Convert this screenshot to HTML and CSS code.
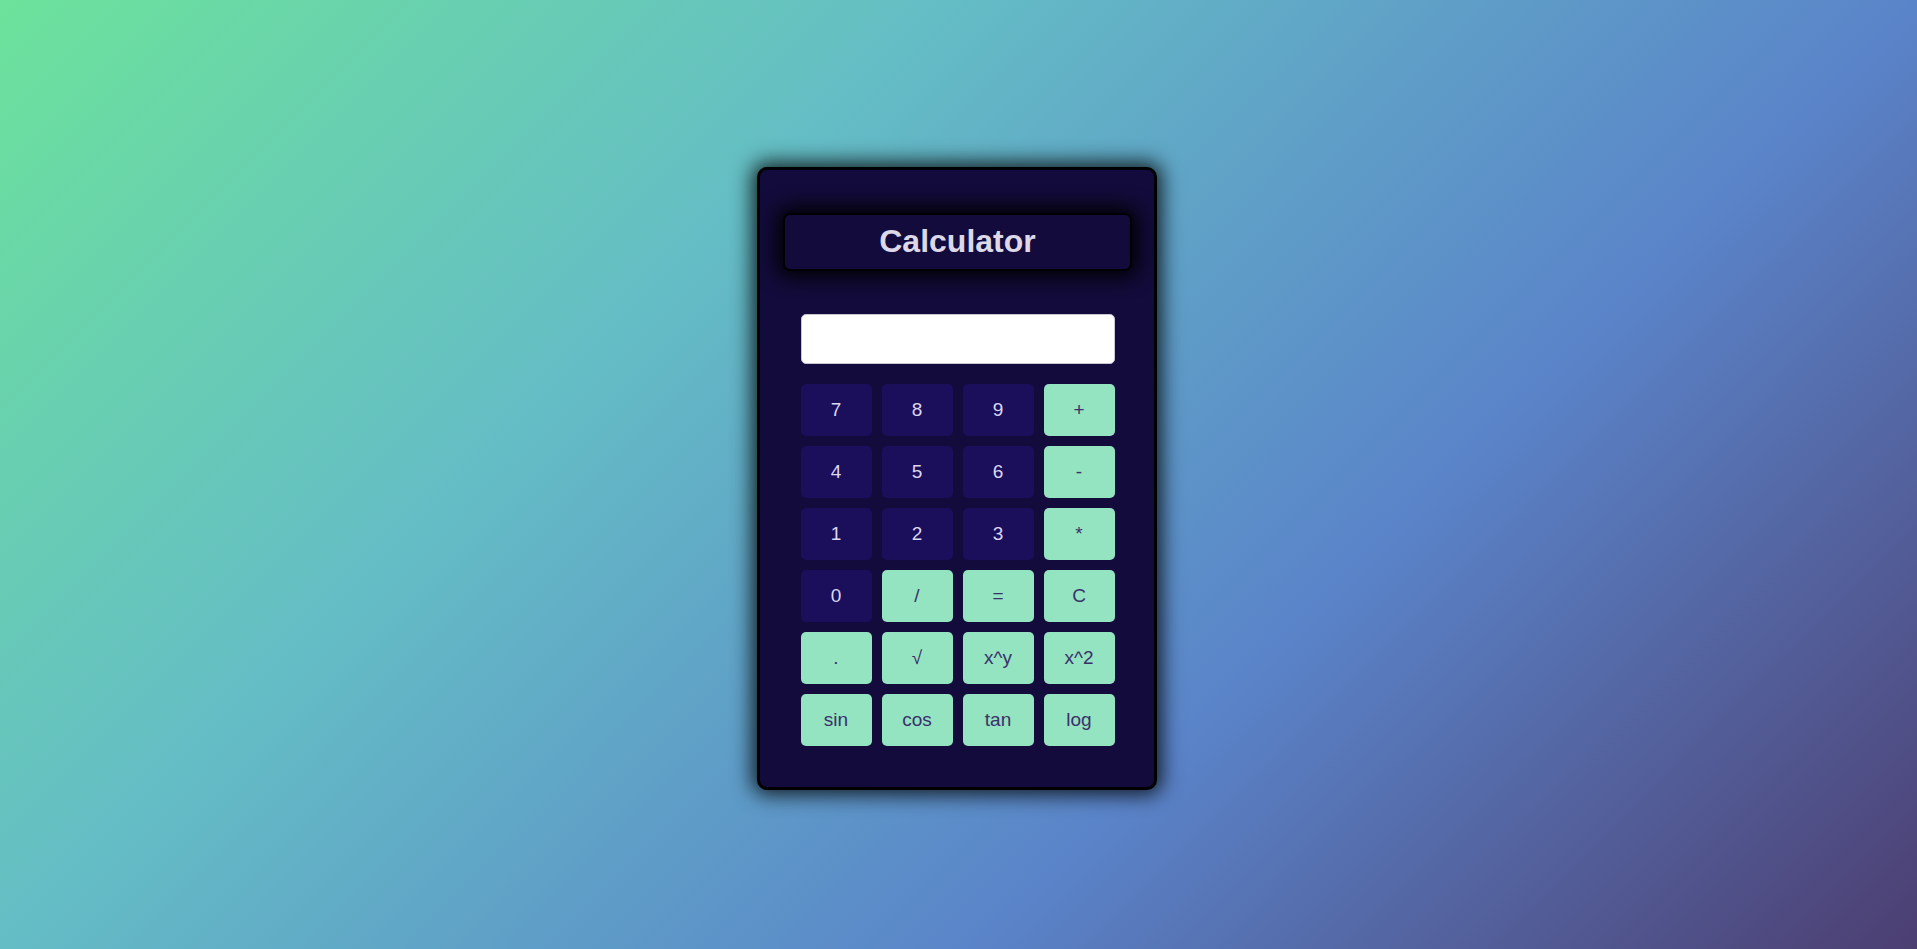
FILE: index.html
```html
<!DOCTYPE html>
<html lang="en">
<head>
<meta charset="utf-8">
<title>Calculator</title>
<link rel="stylesheet" href="styles.css">
</head>
<body>
<main class="page">
  <div class="calculator">
    <h1 class="title">Calculator</h1>
    <input class="display" type="text" readonly>
    <div class="keys">
      <button class="key num">7</button>
      <button class="key num">8</button>
      <button class="key num">9</button>
      <button class="key op">+</button>
      <button class="key num">4</button>
      <button class="key num">5</button>
      <button class="key num">6</button>
      <button class="key op">-</button>
      <button class="key num">1</button>
      <button class="key num">2</button>
      <button class="key num">3</button>
      <button class="key op">*</button>
      <button class="key num">0</button>
      <button class="key op">/</button>
      <button class="key op">=</button>
      <button class="key op">C</button>
      <button class="key op">.</button>
      <button class="key op">√</button>
      <button class="key op">x^y</button>
      <button class="key op">x^2</button>
      <button class="key op">sin</button>
      <button class="key op">cos</button>
      <button class="key op">tan</button>
      <button class="key op">log</button>
    </div>
  </div>
</main>
</body>
</html>
```

FILE: styles.css
```css
* { box-sizing: border-box; }

html, body {
  margin: 0;
  padding: 0;
  height: 100%;
}

body {
  font-family: "Liberation Sans", Arial, sans-serif;
  background: linear-gradient(135deg, #6ce29b 0%, #64bdc5 33%, #5a84c9 67%, #4c3e71 100%);
  background-attachment: fixed;
}

.page {
  min-height: 100vh;
  display: flex;
  align-items: center;
  justify-content: center;
  padding: 7px 3px 0 0;
}

.calculator {
  width: 400px;
  background: #130b3b;
  border: 3px solid #000;
  border-radius: 10px;
  box-shadow: 0 0 20px 5px rgba(0, 0, 0, 0.8);
  padding: 43px 22px 41px 23px;
  display: flex;
  flex-direction: column;
  align-items: center;
}

.title {
  margin: 0;
  width: 349px;
  height: 58px;
  display: flex;
  align-items: center;
  justify-content: center;
  background: #130b3b;
  border: 2px solid #000;
  border-radius: 7px;
  box-shadow: 0 0 20px 6px #000;
  color: #dcd8e8;
  font-size: 32px;
  font-weight: bold;
}

.display {
  margin-top: 43px;
  width: 314px;
  height: 50px;
  background: #fff;
  border: 1px solid #c9c6d2;
  border-radius: 5px;
  outline: none;
  font-family: inherit;
  font-size: 20px;
}

.keys {
  margin-top: 20px;
  display: grid;
  grid-template-columns: repeat(4, 71px);
  grid-auto-rows: 52px;
  gap: 10px;
}

.key {
  border: none;
  border-radius: 5px;
  font-family: "Liberation Sans", Arial, sans-serif;
  font-size: 19px;
  padding: 0;
  cursor: pointer;
}

.num {
  background: #1b0e5b;
  color: #dcd7f0;
}

.op {
  background: #94e3c1;
  color: #3b306b;
}
```
